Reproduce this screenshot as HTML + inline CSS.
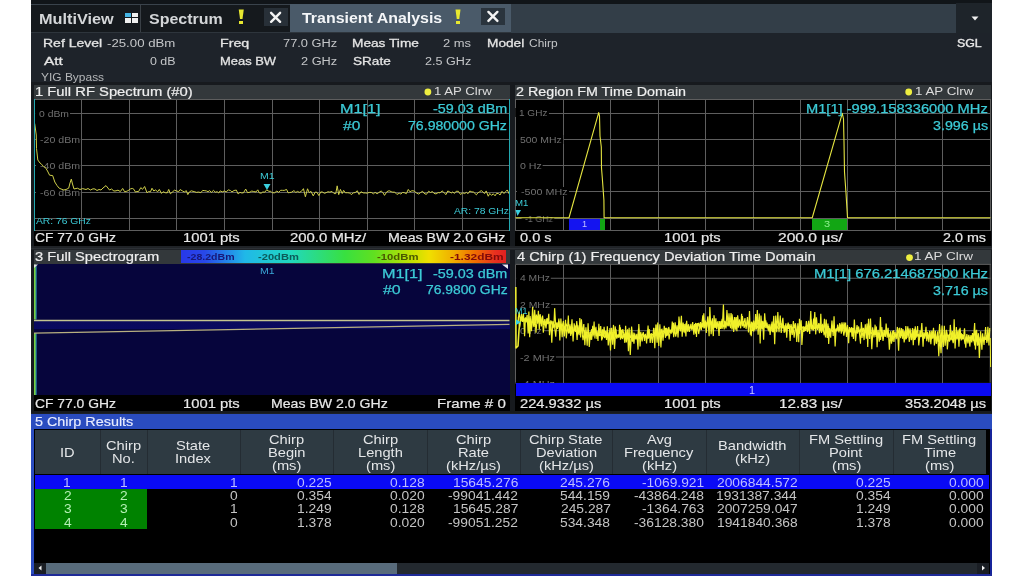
<!DOCTYPE html>
<html><head><meta charset="utf-8"><style>
html,body{margin:0;padding:0;background:#fff;}
body{width:1024px;height:576px;position:relative;overflow:hidden;font-family:"Liberation Sans",sans-serif;}
.t{position:absolute;white-space:pre;line-height:1;transform-origin:0 0;will-change:transform;}
svg{position:absolute;left:0;top:0;}
</style></head><body>
<div style="position:absolute;left:31px;top:0px;width:961px;height:576px;background:#1c2026;"></div>
<div style="position:absolute;left:31px;top:0px;width:961px;height:4px;background:#111519;"></div>
<div style="position:absolute;left:31px;top:4px;width:925px;height:1px;background:#3a434c;"></div>
<div style="position:absolute;left:31px;top:5px;width:259px;height:27px;background:#15191d;"></div>
<div style="position:absolute;left:140px;top:5px;width:1px;height:27px;background:#3a4046;"></div>
<div style="position:absolute;left:31px;top:32px;width:961px;height:1px;background:#2e353c;"></div>
<div style="position:absolute;left:263.8px;top:8px;width:24.399999999999977px;height:18px;background:#283038;"></div>
<div style="position:absolute;left:290px;top:4px;width:221px;height:28px;background:#4a5a69;"></div>
<div style="position:absolute;left:481px;top:8px;width:24px;height:17px;background:#2a343d;"></div>
<div style="position:absolute;left:511px;top:4px;width:445px;height:28.5px;background:#333e48;"></div>
<div style="position:absolute;left:956px;top:3px;width:36px;height:30px;background:#1e242a;"></div>
<div style="position:absolute;left:31px;top:33px;width:961px;height:49px;background:#1e232a;"></div>
<div style="position:absolute;left:125px;top:12.5px;width:6px;height:4.5px;background:#44b4e4;"></div>
<div style="position:absolute;left:132px;top:12.5px;width:6px;height:4.5px;background:#f0f0f0;"></div>
<div style="position:absolute;left:125px;top:18px;width:6px;height:4.5px;background:#f0f0f0;"></div>
<div style="position:absolute;left:132px;top:18px;width:6px;height:4.5px;background:#f0f0f0;"></div>
<div style="position:absolute;left:239.25px;top:21px;width:4.0px;height:2.8000000000000007px;background:#e8e830;"></div>
<div style="position:absolute;left:456.0px;top:21px;width:4.0px;height:2.8000000000000007px;background:#e8e830;"></div>
<div style="position:absolute;left:31px;top:82px;width:961px;height:331px;background:#171a1e;"></div>
<div style="position:absolute;left:34px;top:84.8px;width:476px;height:13.799999999999997px;background:#33383b;"></div>
<div style="position:absolute;left:34px;top:98.6px;width:476px;height:147.4px;background:#000;"></div>
<div style="position:absolute;left:34px;top:250px;width:476px;height:14.199999999999989px;background:#33383b;"></div>
<div style="position:absolute;left:34px;top:264.2px;width:476px;height:147.3px;background:#000;"></div>
<div style="position:absolute;left:515px;top:84.8px;width:476px;height:13.799999999999997px;background:#33383b;"></div>
<div style="position:absolute;left:515px;top:98.6px;width:476px;height:147.4px;background:#000;"></div>
<div style="position:absolute;left:515px;top:250px;width:476px;height:14.199999999999989px;background:#33383b;"></div>
<div style="position:absolute;left:515px;top:264.2px;width:476px;height:147.3px;background:#000;"></div>
<div style="position:absolute;left:31px;top:246px;width:961px;height:4px;background:#202327;"></div>
<div style="position:absolute;left:31px;top:247.6px;width:961px;height:1.0px;background:#2c3035;"></div>
<div style="position:absolute;left:34px;top:264.2px;width:475.5px;height:131.3px;background:#06053c;"></div>
<div style="position:absolute;left:569px;top:218px;width:30.5px;height:13px;background:#1414f0;"></div>
<div style="position:absolute;left:599.5px;top:218px;width:5.25px;height:13px;background:#12a614;"></div>
<div style="position:absolute;left:812.25px;top:218px;width:35.85000000000002px;height:13px;background:#12a614;"></div>
<div style="position:absolute;left:34px;top:321.2px;width:475.5px;height:7.800000000000011px;background:linear-gradient(to bottom,#0c0c70,#0c0c78);opacity:0.6"></div>
<div style="position:absolute;left:181.2px;top:250.3px;width:324.6px;height:12.899999999999977px;background:linear-gradient(to right,#2838e8 0%,#2848e8 7.3%,#20b8e8 19.7%,#20d8c0 33.5%,#38e040 50.4%,#60e020 59.4%,#c8e000 71.7%,#f0e000 76.3%,#f0b000 83.4%,#f07000 90.2%,#e83020 96.7%,#e02020 100%);"></div>
<div style="position:absolute;left:31px;top:413.8px;width:961px;height:162.2px;background:#2a4cbf;"></div>
<div style="position:absolute;left:34px;top:428.5px;width:955.6px;height:145.5px;background:#000;"></div>
<div style="position:absolute;left:990.2px;top:428.5px;width:1.7999999999999545px;height:147.5px;background:#16249a;"></div>
<div style="position:absolute;left:31px;top:574px;width:961px;height:2px;background:#1e2a98;"></div>
<div style="position:absolute;left:34.5px;top:430.3px;width:951.75px;height:43.5px;background:#2e3a42;"></div>
<div style="position:absolute;left:99.75px;top:430.3px;width:1.0px;height:43.5px;background:#242c33;"></div>
<div style="position:absolute;left:146.5px;top:430.3px;width:1.0px;height:43.5px;background:#242c33;"></div>
<div style="position:absolute;left:239.5px;top:430.3px;width:1.0px;height:43.5px;background:#242c33;"></div>
<div style="position:absolute;left:333.0px;top:430.3px;width:1.0px;height:43.5px;background:#242c33;"></div>
<div style="position:absolute;left:426.5px;top:430.3px;width:1.0px;height:43.5px;background:#242c33;"></div>
<div style="position:absolute;left:519.5px;top:430.3px;width:1.0px;height:43.5px;background:#242c33;"></div>
<div style="position:absolute;left:612.0px;top:430.3px;width:1.0px;height:43.5px;background:#242c33;"></div>
<div style="position:absolute;left:705.5px;top:430.3px;width:1.0px;height:43.5px;background:#242c33;"></div>
<div style="position:absolute;left:799.0px;top:430.3px;width:1.0px;height:43.5px;background:#242c33;"></div>
<div style="position:absolute;left:892.5px;top:430.3px;width:1.0px;height:43.5px;background:#242c33;"></div>
<div style="position:absolute;left:34.5px;top:474.8px;width:954.7px;height:14.199999999999989px;background:#0a0af6;"></div>
<div style="position:absolute;left:34.5px;top:489.0px;width:112.25px;height:40.25px;background:#008200;"></div>
<div style="position:absolute;left:34px;top:562.75px;width:955px;height:10.75px;background:#23292f;"></div>
<div style="position:absolute;left:34px;top:562.75px;width:11.600000000000001px;height:10.75px;background:#1a1e24;"></div>
<div style="position:absolute;left:977px;top:562.75px;width:12px;height:10.75px;background:#1a1e24;"></div>
<div style="position:absolute;left:45.6px;top:562.75px;width:351.4px;height:10.75px;background:#586b7b;"></div>
<svg width="1024" height="576" viewBox="0 0 1024 576"><path d="M238.75,9.5 L243.75,9.5 L242.5,19 L240.0,19 Z" fill="#e8e830"/><path d="M455.5,9.5 L460.5,9.5 L459.25,19 L456.75,19 Z" fill="#e8e830"/><path d="M271.1,12.8 L280.1,21.8 M280.1,12.8 L271.1,21.8" stroke="#f4f4f4" stroke-width="2.4" stroke-linecap="round"/><path d="M488.4,11.899999999999999 L497.4,20.9 M497.4,11.899999999999999 L488.4,20.9" stroke="#f4f4f4" stroke-width="2.4" stroke-linecap="round"/><path d="M971.5,16.5 L978.5,16.5 L975,20.5 Z" fill="#f0f0f0"/><line x1="81.5" y1="99" x2="81.5" y2="231" stroke="#5e5e5e" stroke-width="1" shape-rendering="crispEdges"/><line x1="129.5" y1="99" x2="129.5" y2="231" stroke="#5e5e5e" stroke-width="1" shape-rendering="crispEdges"/><line x1="176.5" y1="99" x2="176.5" y2="231" stroke="#5e5e5e" stroke-width="1" shape-rendering="crispEdges"/><line x1="224.5" y1="99" x2="224.5" y2="231" stroke="#5e5e5e" stroke-width="1" shape-rendering="crispEdges"/><line x1="272.5" y1="99" x2="272.5" y2="231" stroke="#5e5e5e" stroke-width="1" shape-rendering="crispEdges"/><line x1="319.5" y1="99" x2="319.5" y2="231" stroke="#5e5e5e" stroke-width="1" shape-rendering="crispEdges"/><line x1="367.5" y1="99" x2="367.5" y2="231" stroke="#5e5e5e" stroke-width="1" shape-rendering="crispEdges"/><line x1="414.5" y1="99" x2="414.5" y2="231" stroke="#5e5e5e" stroke-width="1" shape-rendering="crispEdges"/><line x1="462.5" y1="99" x2="462.5" y2="231" stroke="#5e5e5e" stroke-width="1" shape-rendering="crispEdges"/><line x1="34" y1="113.5" x2="510" y2="113.5" stroke="#5e5e5e" stroke-width="1" shape-rendering="crispEdges"/><line x1="34" y1="139.5" x2="510" y2="139.5" stroke="#5e5e5e" stroke-width="1" shape-rendering="crispEdges"/><line x1="34" y1="165.5" x2="510" y2="165.5" stroke="#5e5e5e" stroke-width="1" shape-rendering="crispEdges"/><line x1="34" y1="192.5" x2="510" y2="192.5" stroke="#5e5e5e" stroke-width="1" shape-rendering="crispEdges"/><line x1="34" y1="218.5" x2="510" y2="218.5" stroke="#5e5e5e" stroke-width="1" shape-rendering="crispEdges"/><line x1="34" y1="99.5" x2="510" y2="99.5" stroke="#5e5e5e" stroke-width="1" shape-rendering="crispEdges"/><line x1="34" y1="230.5" x2="510" y2="230.5" stroke="#5e5e5e" stroke-width="1" shape-rendering="crispEdges"/><line x1="563.5" y1="99" x2="563.5" y2="231" stroke="#5e5e5e" stroke-width="1" shape-rendering="crispEdges"/><line x1="610.5" y1="99" x2="610.5" y2="231" stroke="#5e5e5e" stroke-width="1" shape-rendering="crispEdges"/><line x1="658.5" y1="99" x2="658.5" y2="231" stroke="#5e5e5e" stroke-width="1" shape-rendering="crispEdges"/><line x1="705.5" y1="99" x2="705.5" y2="231" stroke="#5e5e5e" stroke-width="1" shape-rendering="crispEdges"/><line x1="753.5" y1="99" x2="753.5" y2="231" stroke="#5e5e5e" stroke-width="1" shape-rendering="crispEdges"/><line x1="800.5" y1="99" x2="800.5" y2="231" stroke="#5e5e5e" stroke-width="1" shape-rendering="crispEdges"/><line x1="847.5" y1="99" x2="847.5" y2="231" stroke="#5e5e5e" stroke-width="1" shape-rendering="crispEdges"/><line x1="895.5" y1="99" x2="895.5" y2="231" stroke="#5e5e5e" stroke-width="1" shape-rendering="crispEdges"/><line x1="942.5" y1="99" x2="942.5" y2="231" stroke="#5e5e5e" stroke-width="1" shape-rendering="crispEdges"/><line x1="515" y1="113.5" x2="991" y2="113.5" stroke="#5e5e5e" stroke-width="1" shape-rendering="crispEdges"/><line x1="515" y1="139.5" x2="991" y2="139.5" stroke="#5e5e5e" stroke-width="1" shape-rendering="crispEdges"/><line x1="515" y1="165.5" x2="991" y2="165.5" stroke="#5e5e5e" stroke-width="1" shape-rendering="crispEdges"/><line x1="515" y1="191.5" x2="991" y2="191.5" stroke="#5e5e5e" stroke-width="1" shape-rendering="crispEdges"/><line x1="515" y1="218.5" x2="991" y2="218.5" stroke="#5e5e5e" stroke-width="1" shape-rendering="crispEdges"/><line x1="515" y1="99.5" x2="991" y2="99.5" stroke="#5e5e5e" stroke-width="1" shape-rendering="crispEdges"/><line x1="515" y1="230.5" x2="991" y2="230.5" stroke="#5e5e5e" stroke-width="1" shape-rendering="crispEdges"/><line x1="515.5" y1="99" x2="515.5" y2="231" stroke="#5e5e5e" stroke-width="1" shape-rendering="crispEdges"/><line x1="990.5" y1="99" x2="990.5" y2="231" stroke="#5e5e5e" stroke-width="1" shape-rendering="crispEdges"/><line x1="563.5" y1="264" x2="563.5" y2="383" stroke="#5e5e5e" stroke-width="1" shape-rendering="crispEdges"/><line x1="610.5" y1="264" x2="610.5" y2="383" stroke="#5e5e5e" stroke-width="1" shape-rendering="crispEdges"/><line x1="658.5" y1="264" x2="658.5" y2="383" stroke="#5e5e5e" stroke-width="1" shape-rendering="crispEdges"/><line x1="705.5" y1="264" x2="705.5" y2="383" stroke="#5e5e5e" stroke-width="1" shape-rendering="crispEdges"/><line x1="753.5" y1="264" x2="753.5" y2="383" stroke="#5e5e5e" stroke-width="1" shape-rendering="crispEdges"/><line x1="800.5" y1="264" x2="800.5" y2="383" stroke="#5e5e5e" stroke-width="1" shape-rendering="crispEdges"/><line x1="847.5" y1="264" x2="847.5" y2="383" stroke="#5e5e5e" stroke-width="1" shape-rendering="crispEdges"/><line x1="895.5" y1="264" x2="895.5" y2="383" stroke="#5e5e5e" stroke-width="1" shape-rendering="crispEdges"/><line x1="942.5" y1="264" x2="942.5" y2="383" stroke="#5e5e5e" stroke-width="1" shape-rendering="crispEdges"/><line x1="515.5" y1="278.25" x2="991" y2="278.25" stroke="#5e5e5e" stroke-width="1"/><line x1="515.5" y1="304.4" x2="991" y2="304.4" stroke="#5e5e5e" stroke-width="1"/><line x1="515.5" y1="330.7" x2="991" y2="330.7" stroke="#5e5e5e" stroke-width="1"/><line x1="515.5" y1="357.0" x2="991" y2="357.0" stroke="#5e5e5e" stroke-width="1"/><line x1="515.5" y1="383.4" x2="991" y2="383.4" stroke="#5e5e5e" stroke-width="1"/><line x1="515.5" y1="264.4" x2="991" y2="264.4" stroke="#5e5e5e" stroke-width="1"/><line x1="515.5" y1="264.4" x2="515.5" y2="382.7" stroke="#5e5e5e" stroke-width="1"/><line x1="990.2" y1="264.4" x2="990.2" y2="382.7" stroke="#5e5e5e" stroke-width="1"/><path d="M263.5,184 L270.5,184 L267,190 Z" fill="#3ad0e0"/><path d="M515.5,210 L521,210 L517.5,216 Z" fill="#3ad0e0"/><line x1="34.9" y1="264.5" x2="34.9" y2="319.5" stroke="#78d040" stroke-width="1.8"/><line x1="36.1" y1="266" x2="36.1" y2="319.5" stroke="#30b8d0" stroke-width="0.8"/><line x1="34.9" y1="333" x2="34.9" y2="395" stroke="#78d040" stroke-width="1.8"/><line x1="36.1" y1="333" x2="36.1" y2="395" stroke="#30b8d0" stroke-width="0.8"/><line x1="34" y1="320.5" x2="509.5" y2="320.5" stroke="#c4c490" stroke-width="1.3"/><path d="M502,264.5 L508,264.5 L508,269 Z" fill="#e8e8f0"/><path d="M34,264.5 L38,264.5 L34,268 Z" fill="#e0e0e0"/><circle cx="427.9" cy="92.0" r="3.4" fill="#eeee40"/><circle cx="908.7" cy="92.0" r="3.4" fill="#eeee40"/><circle cx="909.5" cy="257.59999999999997" r="3.4" fill="#eeee40"/><path d="M38.5,568 L41.5,565.5 L41.5,570.5 Z" fill="#f0f0f0"/><path d="M985,568 L982,565.5 L982,570.5 Z" fill="#f0f0f0"/></svg>
<div class="t" style="left:38.58px;top:108.54px;font-size:9.4px;color:#707070;transform:scaleX(1.1078);background:#000;box-shadow:-3.5px 0 0 #000,1px 0 0 #000">0 dBm</div>
<div class="t" style="left:39.77px;top:134.74px;font-size:9.4px;color:#707070;transform:scaleX(1.1319);background:#000;box-shadow:-3.5px 0 0 #000,1px 0 0 #000">-20 dBm</div>
<div class="t" style="left:39.77px;top:161.14px;font-size:9.4px;color:#707070;transform:scaleX(1.1319);background:#000;box-shadow:-3.5px 0 0 #000,1px 0 0 #000">-40 dBm</div>
<div class="t" style="left:39.77px;top:187.54px;font-size:9.4px;color:#707070;transform:scaleX(1.1319);background:#000;box-shadow:-3.5px 0 0 #000,1px 0 0 #000">-60 dBm</div>
<div class="t" style="left:519.00px;top:108.29px;font-size:9.4px;color:#707070;transform:scaleX(1.0697);background:#000;box-shadow:-3.5px 0 0 #000,1px 0 0 #000">1 GHz</div>
<div class="t" style="left:519.68px;top:134.94px;font-size:9.4px;color:#707070;transform:scaleX(1.1128);background:#000;box-shadow:-3.5px 0 0 #000,1px 0 0 #000">500 MHz</div>
<div class="t" style="left:519.67px;top:161.24px;font-size:9.4px;color:#707070;transform:scaleX(1.1315);background:#000;box-shadow:-3.5px 0 0 #000,1px 0 0 #000">0 Hz</div>
<div class="t" style="left:520.92px;top:187.04px;font-size:9.4px;color:#707070;transform:scaleX(1.1441);background:#000;box-shadow:-3.5px 0 0 #000,1px 0 0 #000">-500 MHz</div>
<div class="t" style="left:525.35px;top:214.04px;font-size:9.4px;color:#707070;transform:scaleX(0.9443);background:#000;box-shadow:-3.5px 0 0 #000,1px 0 0 #000">-1 GHz</div>
<div class="t" style="left:520.39px;top:273.44px;font-size:9.4px;color:#707070;transform:scaleX(1.0997);background:#000;box-shadow:-3.5px 0 0 #000,1px 0 0 #000">4 MHz</div>
<div class="t" style="left:520.08px;top:299.84px;font-size:9.4px;color:#707070;transform:scaleX(1.1115);background:#000;box-shadow:-3.5px 0 0 #000,1px 0 0 #000">2 MHz</div>
<div class="t" style="left:520.17px;top:326.24px;font-size:9.4px;color:#707070;transform:scaleX(1.1315);background:#000;box-shadow:-3.5px 0 0 #000,1px 0 0 #000">0 Hz</div>
<div class="t" style="left:520.31px;top:352.64px;font-size:9.4px;color:#707070;transform:scaleX(1.1574);background:#000;box-shadow:-3.5px 0 0 #000,1px 0 0 #000">-2 MHz</div>
<div class="t" style="left:520.31px;top:379.04px;font-size:9.4px;color:#707070;transform:scaleX(1.1574);background:#000;box-shadow:-3.5px 0 0 #000,1px 0 0 #000">-4 MHz</div>
<svg width="1024" height="576" viewBox="0 0 1024 576"><polyline points="34.70,123.50 36.25,135.00 36.50,148.50 37.80,160.00 40.00,163.00 41.50,164.20 43.50,166.50 45.30,167.40 47.50,171.00 49.60,175.20 52.70,175.60 54.80,182.00 57.00,185.50 59.20,188.20 63.50,190.00 66.00,189.50 68.70,188.20 70.00,183.00 71.30,179.10 72.50,184.00 74.00,189.00 77.40,188.20 80.00,189.50 82.60,188.60 86.00,189.50 88.00,188.50 90.40,190.00 93.00,188.80 95.00,189.00 97.00,190.50 99.00,189.50 101.00,190.00 103.00,188.00 106.00,185.60 109.50,190.00 111.50,189.00 113.90,191.00 116.00,190.84 118.00,190.15 120.33,191.57 122.68,188.44 124.59,191.74 126.13,191.47 128.04,190.68 130.42,188.93 132.30,188.41 133.94,189.37 135.47,192.10 136.95,191.44 138.50,191.66 140.80,187.61 142.55,189.31 144.64,186.50 147.04,192.81 148.49,191.54 150.48,191.83 151.97,188.23 153.84,191.03 155.43,189.92 157.73,191.72 159.32,189.43 161.45,193.43 163.06,191.72 165.44,192.76 167.28,192.83 168.72,189.45 170.36,193.79 172.31,192.09 174.49,190.22 176.52,190.94 178.70,191.62 180.14,189.55 182.54,190.99 184.29,191.94 186.33,190.67 187.81,194.62 189.25,192.06 191.28,190.84 193.04,191.34 194.83,191.75 196.32,192.37 198.63,192.05 200.83,192.68 202.70,190.42 204.82,190.68 206.48,190.96 208.02,191.70 209.71,190.58 211.35,192.41 213.48,190.38 215.30,192.18 217.21,191.70 218.71,192.96 220.14,190.88 222.32,191.90 224.48,190.94 226.22,192.03 228.31,189.82 230.49,190.60 231.95,191.95 234.06,190.48 236.34,190.08 238.11,193.93 239.97,192.33 241.51,192.93 243.43,192.88 245.70,189.04 247.56,192.70 249.95,192.16 251.77,191.03 253.71,191.55 255.97,191.98 257.78,189.82 259.26,192.82 261.17,193.18 262.79,191.97 264.80,192.18 266.65,189.88 268.98,191.35 270.74,191.28 272.23,192.76 274.54,192.81 276.85,191.06 278.62,192.36 280.74,190.27 282.64,190.35 284.21,190.40 286.55,189.45 288.11,192.77 289.64,192.56 291.62,192.16 293.94,190.60 295.81,192.43 297.61,191.38 299.26,192.37 301.38,191.36 303.44,188.67 305.37,196.76 307.55,188.77 309.18,192.68 310.95,191.27 313.24,195.89 315.22,192.07 316.94,192.30 318.89,195.57 320.65,191.97 322.26,191.94 324.60,193.34 326.13,192.63 327.94,191.75 329.86,192.11 331.94,191.40 334.06,193.56 335.75,193.61 337.18,185.83 338.71,194.67 340.41,189.43 342.19,193.55 343.62,190.36 345.30,192.77 347.58,192.74 349.69,193.00 351.27,194.62 353.38,192.88 355.20,192.54 357.30,190.75 359.08,194.49 360.96,191.72 363.21,192.91 365.54,193.01 367.03,193.17 369.24,192.43 371.26,192.43 373.49,193.79 375.08,192.37 377.12,193.76 378.85,192.49 381.14,190.99 382.79,192.46 384.51,195.39 386.89,191.70 389.06,190.73 391.18,191.64 392.81,192.18 394.69,192.08 396.90,194.41 399.27,193.26 400.90,194.09 402.45,192.45 404.21,192.68 406.35,193.66 408.29,189.46 409.91,191.80 411.89,190.74 414.12,190.98 416.38,192.91 418.74,194.09 420.38,192.68 422.58,191.30 424.03,193.30 426.33,194.40 428.63,191.24 430.48,192.46 432.47,191.57 433.92,193.29 435.99,193.94 438.20,192.56 440.03,192.90 442.06,190.85 444.08,192.76 446.03,194.64 447.74,190.97 449.62,191.79 451.29,192.99 452.80,191.85 454.36,193.48 456.11,191.29 458.39,191.31 460.54,194.51 462.69,192.82 464.64,193.55 466.44,192.32 467.87,193.76 469.87,191.06 471.90,191.95 473.39,191.97 474.99,193.48 476.40,194.84 477.87,192.86 479.62,191.71 481.46,190.59 482.97,192.20 484.59,193.57 486.20,190.92 488.25,196.24 489.75,193.42 491.63,195.42 493.23,193.74 495.07,195.84 496.55,193.39 498.52,193.63 500.03,195.02 502.00,191.31 503.98,193.56 505.52,191.71 507.28,189.95 509.50,194.50" fill="none" stroke="#cfcf4a" stroke-width="1.0" stroke-linejoin="round" /><line x1="34.5" y1="99" x2="34.5" y2="231" stroke="#22a8b0" stroke-width="1"/><line x1="509.5" y1="99" x2="509.5" y2="231" stroke="#22a8b0" stroke-width="1"/><polyline points="515.50,217.75 569.00,217.75 598.70,112.60 599.50,116.00 600.00,136.00 601.30,147.00 601.50,168.00 602.30,178.00 603.90,200.00 604.10,217.75 812.25,217.75 842.30,113.30 843.50,119.00 844.00,142.00 844.50,172.00 846.00,193.00 847.50,217.75 990.50,217.75" fill="none" stroke="#e4e440" stroke-width="1.1" stroke-linejoin="round" /><polyline points="34.00,333.20 509.50,324.40" fill="none" stroke="#b8b080" stroke-width="1.3" stroke-linejoin="round" /><polyline points="518.00,321.01 519.17,311.88 520.39,321.48 521.57,314.06 522.43,321.89 523.44,313.52 524.61,336.34 525.44,317.28 526.17,322.44 527.15,314.91 528.16,333.50 528.86,311.45 529.68,337.12 530.48,318.44 531.48,331.17 532.63,307.04 533.63,326.58 534.69,309.89 535.59,323.13 536.51,314.46 537.58,323.64 538.37,310.68 539.31,329.55 540.14,314.17 541.36,326.48 542.57,315.50 543.61,325.22 544.87,319.04 546.10,325.30 547.02,318.36 547.75,324.24 548.77,313.84 549.49,335.26 550.77,320.22 551.78,342.81 552.84,321.42 553.85,326.92 554.64,308.16 555.83,327.74 557.02,322.36 558.19,327.09 559.03,321.40 559.84,340.49 560.88,318.57 562.15,337.14 563.16,323.23 564.31,336.52 565.53,319.71 566.27,338.32 567.54,326.50 568.65,333.38 569.93,324.25 570.75,335.92 572.00,319.37 573.07,341.35 574.16,323.33 575.14,330.84 575.95,325.23 577.11,340.05 577.88,325.33 579.10,335.25 579.83,318.15 580.68,337.59 581.41,319.28 582.51,333.71 583.78,324.15 584.87,345.10 585.91,327.20 587.19,345.74 588.08,323.39 589.26,346.86 590.44,331.61 591.67,339.79 592.75,325.88 593.85,334.88 595.03,328.33 596.25,336.16 596.97,330.75 598.00,341.03 598.86,323.74 599.62,335.98 600.71,326.00 601.64,340.34 602.49,329.39 603.23,336.35 604.11,326.72 604.89,336.67 605.64,330.79 606.53,339.91 607.34,326.20 608.26,345.39 609.40,331.66 610.50,350.43 611.66,327.76 612.68,344.78 613.46,324.90 614.54,349.05 615.81,329.09 616.74,338.62 617.90,334.92 618.87,337.72 619.59,324.81 620.52,339.73 621.45,329.74 622.38,339.03 623.68,334.10 624.87,342.82 625.63,325.72 626.43,341.80 627.58,329.35 628.41,351.28 629.13,327.76 630.26,354.86 631.50,332.14 632.43,341.63 633.15,335.38 633.96,343.80 634.77,333.59 635.79,339.39 636.86,333.98 638.04,349.59 638.82,324.05 640.08,346.38 640.91,334.02 642.16,341.38 643.22,333.38 644.20,337.10 645.39,333.87 646.60,343.55 647.48,331.06 648.28,338.63 649.18,329.08 650.19,342.85 651.24,332.99 652.42,342.84 653.69,327.72 654.80,348.17 655.90,324.55 657.07,342.62 657.77,322.57 658.72,345.89 659.86,324.37 660.89,347.59 661.97,328.67 663.03,340.77 664.26,325.92 665.41,337.81 666.59,327.86 667.78,335.59 668.72,326.98 669.87,332.94 671.02,330.05 672.22,332.42 673.39,322.78 674.11,332.33 675.16,322.39 676.27,333.85 677.08,325.33 678.04,337.40 678.96,316.51 680.19,330.75 681.42,315.70 682.17,336.82 683.12,322.53 684.10,332.09 685.03,324.08 685.92,336.49 686.65,320.77 687.62,331.68 688.47,324.25 689.55,329.25 690.56,326.17 691.84,329.07 692.69,321.98 693.86,334.64 694.64,323.94 695.63,333.64 696.70,323.63 697.61,327.43 698.60,322.84 699.69,327.64 700.49,322.12 701.21,330.17 702.19,322.89 702.99,327.32 703.80,313.33 704.75,328.11 706.01,322.43 706.73,327.45 707.90,316.28 709.13,336.18 709.85,307.13 711.14,334.30 712.25,321.20 713.32,336.09 714.03,315.19 714.98,328.05 715.88,318.27 716.69,329.15 717.95,321.16 719.06,335.93 719.76,321.02 720.54,328.95 721.37,320.72 722.23,328.83 723.42,304.59 724.14,329.34 724.89,320.79 725.96,328.45 726.93,310.00 728.09,326.26 729.01,313.29 729.95,326.32 731.07,313.08 731.94,329.42 732.91,319.84 733.66,331.92 734.46,317.13 735.29,329.81 736.15,317.11 736.90,331.27 737.64,315.25 738.86,325.70 739.78,322.49 740.64,328.32 741.61,313.88 742.33,326.32 743.08,321.20 744.13,327.83 745.17,323.30 746.36,327.06 747.41,317.05 748.48,332.51 749.50,310.91 750.37,334.74 751.48,321.70 752.67,330.95 753.52,320.49 754.76,330.13 755.58,314.13 756.32,329.49 757.34,310.09 758.12,334.69 759.27,313.49 760.16,343.51 760.96,315.46 761.96,329.52 762.83,321.43 763.61,339.68 764.66,313.21 765.81,328.01 766.97,322.71 768.22,330.08 769.07,324.06 770.13,335.01 771.26,323.91 772.54,332.20 773.79,315.92 774.68,344.21 775.75,315.42 776.73,332.22 777.83,312.15 779.02,332.17 780.26,315.45 781.23,332.94 782.15,323.10 783.08,328.34 784.05,325.28 784.83,332.21 785.87,323.26 786.71,337.70 787.59,324.74 788.48,328.82 789.25,324.29 790.12,341.00 791.17,325.95 792.24,334.88 793.36,321.08 794.18,328.47 795.48,323.17 796.77,341.99 797.83,323.31 798.73,342.24 799.47,318.71 800.22,329.93 801.18,320.35 801.88,344.99 803.12,326.10 804.01,331.95 804.73,326.66 805.49,330.90 806.39,321.14 807.57,330.62 808.64,320.90 809.69,333.99 810.77,310.92 811.51,329.34 812.70,325.68 813.51,330.53 814.79,312.14 815.73,334.35 816.44,317.30 817.57,329.91 818.81,323.22 820.07,329.98 820.80,313.71 821.53,330.82 822.49,324.88 823.27,331.98 824.47,318.87 825.51,337.36 826.22,319.56 827.20,338.07 827.94,323.53 828.67,344.07 829.60,328.16 830.69,337.77 831.97,320.57 833.19,336.03 834.06,316.39 835.12,346.36 836.14,328.30 836.89,331.33 837.64,324.68 838.93,332.46 839.74,322.99 840.96,331.25 841.97,322.39 842.85,331.32 844.03,322.29 844.74,332.38 845.55,322.59 846.51,336.89 847.38,326.73 848.62,343.32 849.51,327.14 850.51,332.06 851.27,328.30 851.99,336.64 852.70,328.10 853.45,338.99 854.34,319.52 855.52,341.16 856.55,329.79 857.76,333.56 858.53,326.48 859.67,332.71 860.80,328.54 861.97,337.82 863.10,329.89 864.08,340.07 865.34,324.21 866.28,338.75 867.00,323.59 867.74,346.86 868.55,318.75 869.62,338.90 870.51,318.62 871.79,349.20 872.88,329.90 873.76,334.88 874.53,331.52 875.31,335.04 876.34,326.43 877.08,347.18 878.06,329.80 879.28,341.71 880.45,316.96 881.27,336.65 882.33,331.78 883.03,341.03 884.22,329.90 885.38,336.36 886.13,323.54 887.19,337.70 888.12,327.80 889.39,349.63 890.46,332.45 891.44,343.61 892.72,330.78 893.92,341.93 894.99,332.10 896.16,339.13 897.38,326.91 898.61,350.69 899.61,327.68 900.70,338.25 901.49,327.99 902.79,339.03 904.04,331.10 905.07,339.54 905.82,326.07 906.95,337.97 908.18,328.48 908.88,336.40 910.04,328.28 911.29,340.23 912.51,327.98 913.27,345.29 914.20,328.73 915.21,339.74 916.51,330.50 917.41,336.51 918.22,333.89 919.28,339.14 920.01,330.53 920.74,336.78 921.83,322.98 923.07,346.74 923.80,332.38 924.75,338.69 926.01,326.89 926.75,341.30 927.46,332.90 928.44,339.41 929.73,330.72 930.86,344.19 931.78,330.78 932.63,338.60 933.50,327.85 934.41,345.53 935.32,330.80 936.41,343.61 937.69,331.41 938.77,356.30 939.90,335.37 941.01,353.30 942.19,332.26 943.29,347.08 944.33,325.89 945.17,345.71 946.32,330.39 947.34,349.34 948.57,334.75 949.43,341.61 950.32,324.91 951.44,339.42 952.37,331.12 953.44,342.25 954.15,319.23 955.08,348.59 956.31,327.06 957.39,338.62 958.16,330.63 958.93,346.83 960.06,327.72 961.23,340.43 962.19,334.07 963.34,339.08 964.53,328.37 965.76,347.67 966.84,334.12 967.92,343.35 968.85,334.74 969.82,346.57 970.92,334.97 971.73,342.55 972.54,332.94 973.38,341.14 974.65,323.02 975.46,349.60 976.61,329.78 977.49,345.74 978.39,333.15 979.39,358.00 980.60,331.36 981.89,349.69 982.64,336.29 983.40,340.10 984.40,336.82 985.31,339.87 986.20,335.38 987.10,341.44 987.88,326.83 988.97,345.52 989.73,328.00" stroke="#eeee2a" stroke-width="1.2" fill="none" stroke-linejoin="bevel"/><polyline points="518.30,316.78 519.53,327.33 520.91,318.50 522.15,321.35 522.98,317.34 524.05,321.93 524.93,318.15 526.10,320.83 527.47,319.78 528.90,326.67 530.13,316.08 531.47,328.05 532.90,318.85 534.10,327.28 534.98,317.55 535.98,332.62 537.38,316.33 538.74,322.21 539.85,314.79 540.88,323.78 542.30,316.56 543.32,332.74 544.66,321.27 546.04,328.35 546.99,318.65 548.01,323.38 549.61,321.85 550.43,325.78 551.88,320.94 553.15,328.21 554.24,323.90 555.73,336.59 556.68,324.68 557.59,328.87 558.89,318.49 559.75,330.02 561.18,323.97 562.04,327.91 563.35,320.99 564.51,329.07 566.08,323.62 567.45,328.70 568.32,315.64 569.17,333.33 570.13,326.40 571.19,334.34 572.64,327.10 573.52,332.33 574.75,328.89 575.76,331.90 576.74,320.96 578.20,333.82 579.02,330.29 580.06,332.87 581.54,327.96 583.03,340.19 584.51,330.21 585.52,338.42 586.59,331.51 588.05,333.42 588.98,332.13 590.16,340.01 591.71,329.08 593.09,336.44 594.11,321.57 594.91,338.59 595.93,326.70 596.98,338.90 598.36,333.69 599.35,335.89 600.83,334.33 602.08,339.20 603.58,334.87 604.79,337.97 605.76,335.43 606.61,337.75 607.77,332.65 608.88,338.78 609.98,328.02 611.18,339.53 612.61,334.20 613.78,339.01 615.18,326.25 616.63,337.83 618.01,334.40 619.37,336.71 620.37,327.34 621.49,337.82 622.82,328.99 624.24,336.87 625.55,331.52 626.38,342.45 627.39,330.86 628.33,339.32 629.40,335.19 630.63,337.89 631.63,326.59 633.01,341.32 633.87,332.64 635.13,337.88 636.28,335.83 637.49,339.66 638.50,328.66 639.93,339.03 640.76,331.90 641.72,337.19 643.30,332.04 644.53,340.82 645.38,334.77 646.92,339.27 648.06,325.62 648.99,337.72 650.42,334.47 651.76,335.96 652.74,334.06 654.10,336.02 655.26,328.05 656.08,334.69 657.11,324.49 658.10,335.72 659.23,332.61 660.15,335.40 661.11,329.19 662.04,333.85 663.00,330.42 664.47,332.97 665.34,327.77 666.54,336.09 667.97,328.48 669.17,339.56 670.33,329.69 671.26,333.67 672.27,321.54 673.70,337.25 674.66,328.81 675.71,336.63 676.81,330.18 678.15,332.50 679.63,326.10 680.79,331.44 681.78,323.65 682.64,332.57 683.97,324.12 684.99,333.30 686.12,322.80 686.99,328.60 687.87,327.23 689.38,331.81 690.91,323.85 691.89,330.08 693.05,325.67 694.62,327.06 695.68,322.94 696.49,336.91 697.35,323.06 698.71,334.05 700.18,324.54 701.24,329.69 702.78,315.31 703.86,328.49 705.42,320.59 706.29,332.89 707.62,317.25 708.87,329.91 710.41,319.59 711.37,325.48 712.44,318.25 713.41,327.58 714.99,324.10 716.03,327.94 716.90,322.09 718.37,325.84 719.65,321.85 721.00,328.53 722.11,318.91 723.14,327.20 724.67,323.36 725.75,327.08 726.95,322.09 728.03,326.00 729.10,321.51 730.65,328.22 732.10,314.36 733.49,327.38 734.96,317.87 736.33,329.41 737.35,322.57 738.32,327.65 739.47,319.50 740.89,324.68 742.45,316.09 743.48,325.54 745.00,318.12 746.06,329.05 747.53,319.88 748.98,326.97 750.15,324.25 751.26,336.08 752.48,322.54 753.71,331.56 755.31,320.86 756.14,329.13 757.36,326.27 758.82,328.93 760.19,324.46 761.42,327.67 762.88,320.95 764.41,327.33 765.83,320.40 766.92,328.20 767.98,326.32 768.97,331.28 769.86,325.32 771.00,331.28 772.03,321.65 773.43,332.13 774.71,323.56 775.95,328.60 776.97,325.82 778.32,329.18 779.88,326.43 781.34,327.36 782.87,317.84 784.09,332.77 785.63,325.63 786.91,328.02 788.16,322.62 789.69,330.18 791.08,324.06 791.93,328.58 793.10,327.16 794.14,337.74 795.60,324.88 796.63,333.36 798.11,326.18 799.57,333.78 800.61,323.85 801.94,327.87 803.44,327.68 804.84,328.33 805.95,326.60 807.46,331.97 809.00,327.80 809.93,328.63 810.97,319.15 812.17,330.27 813.58,318.47 814.49,328.78 815.93,327.10 817.43,328.66 818.52,324.68 819.46,333.21 820.45,327.28 821.55,333.00 822.73,323.91 824.05,335.28 825.56,328.64 827.08,332.27 828.52,325.93 829.74,336.18 831.02,328.92 832.45,331.75 833.91,328.97 834.90,332.83 835.91,329.03 836.73,330.92 837.99,327.21 839.40,330.67 840.38,324.56 841.28,333.61 842.26,323.78 843.82,335.57 845.07,328.10 846.42,330.57 847.49,325.06 848.45,333.66 849.76,327.85 850.60,332.26 851.70,327.11 852.98,333.84 854.43,331.01 855.77,333.29 857.06,325.05 857.92,331.69 859.10,330.25 860.51,343.65 861.32,322.12 862.37,332.12 863.34,327.79 864.46,333.31 865.29,327.84 866.89,334.38 867.97,325.83 868.92,335.04 870.40,331.90 871.83,334.02 872.65,327.36 874.03,337.44 875.09,324.67 876.05,337.03 876.95,331.37 877.82,335.50 879.23,332.87 880.56,339.85 881.84,327.12 883.20,339.27 884.22,330.30 885.11,336.95 886.43,331.27 887.53,334.12 888.49,333.11 889.76,337.09 890.59,331.23 892.18,341.35 893.56,330.32 894.88,336.19 896.18,334.00 897.07,338.43 897.89,327.99 899.31,336.61 900.71,331.38 901.61,336.03 902.96,329.15 904.16,342.37 905.47,334.56 906.32,339.25 907.80,326.37 909.27,341.89 910.53,333.32 911.92,339.73 913.12,330.91 914.45,339.92 915.27,326.24 916.21,337.74 917.58,325.95 918.76,345.39 919.96,334.90 921.06,337.11 922.36,333.00 923.44,336.02 924.80,333.48 926.06,336.24 927.46,331.85 928.84,342.29 929.91,331.83 931.02,339.63 932.53,334.15 934.00,337.66 935.38,333.94 936.30,343.56 937.56,335.89 938.48,341.87 939.55,324.03 940.96,343.31 942.05,325.60 942.92,337.18 944.34,335.32 945.43,342.73 946.46,329.91 948.00,338.29 949.49,333.90 950.85,340.32 952.08,336.98 953.17,343.07 954.69,334.58 956.11,339.48 957.06,335.22 958.32,340.00 959.31,328.96 960.37,338.73 961.19,333.22 962.47,339.36 963.51,335.46 965.10,344.19 966.04,336.67 967.20,341.37 968.38,335.43 969.88,338.74 970.74,336.78 972.32,338.76 973.30,335.27 974.66,345.45 975.74,330.59 976.78,341.67 977.79,335.47 978.59,344.60 980.02,336.82 981.30,342.34 982.63,333.36 984.02,344.86 985.60,327.02 986.86,342.88 987.88,333.64 989.19,339.65" stroke="#f2f22a" stroke-width="1.1" fill="none" stroke-linejoin="bevel"/><polyline points="515.80,287.00 516.00,348.00 518.00,346.00 519.00,330.00 520.00,322.00" fill="none" stroke="#ecec30" stroke-width="1.6" stroke-linejoin="round" /><polyline points="990.30,338.00 990.60,367.00" fill="none" stroke="#ecec30" stroke-width="1.0" stroke-linejoin="round" /></svg>
<div class="t" style="left:38.94px;top:11.65px;font-size:14px;font-weight:bold;color:#d4d6d8;transform:scaleX(1.1629);">MultiView</div>
<div class="t" style="left:149.22px;top:11.55px;font-size:14px;font-weight:bold;color:#d4d6d8;transform:scaleX(1.1413);">Spectrum</div>
<div class="t" style="left:302.34px;top:10.75px;font-size:14px;font-weight:bold;color:#f4f6f8;transform:scaleX(1.1380);">Transient Analysis</div>
<div class="t" style="left:957.44px;top:38.36px;font-size:10.8px;color:#e8e8e8;transform:scaleX(1.1424);-webkit-text-stroke:0.35px #e8e8e8">SGL</div>
<div class="t" style="left:42.63px;top:37.29px;font-size:11.7px;color:#e4e4e4;transform:scaleX(1.1993);-webkit-text-stroke:0.3px #e4e4e4">Ref Level</div>
<div class="t" style="left:107.40px;top:37.29px;font-size:11.7px;color:#c4c6c8;transform:scaleX(1.1317);">-25.00 dBm</div>
<div class="t" style="left:44.10px;top:54.69px;font-size:11.7px;color:#e4e4e4;transform:scaleX(1.3225);-webkit-text-stroke:0.3px #e4e4e4">Att</div>
<div class="t" style="left:150.10px;top:54.69px;font-size:11.7px;color:#c4c6c8;transform:scaleX(1.0613);">0 dB</div>
<div class="t" style="left:41.36px;top:70.59px;font-size:11.7px;color:#b4b6b8;transform:scaleX(1.0224);">YIG Bypass</div>
<div class="t" style="left:219.86px;top:37.09px;font-size:11.7px;color:#e4e4e4;transform:scaleX(1.2185);-webkit-text-stroke:0.3px #e4e4e4">Freq</div>
<div class="t" style="left:283.36px;top:37.09px;font-size:11.7px;color:#c4c6c8;transform:scaleX(1.0982);">77.0 GHz</div>
<div class="t" style="left:219.96px;top:54.69px;font-size:11.7px;color:#e4e4e4;transform:scaleX(1.1061);-webkit-text-stroke:0.3px #e4e4e4">Meas BW</div>
<div class="t" style="left:301.36px;top:54.69px;font-size:11.7px;color:#c4c6c8;transform:scaleX(1.0938);">2 GHz</div>
<div class="t" style="left:352.30px;top:37.09px;font-size:11.7px;color:#e4e4e4;transform:scaleX(1.1710);-webkit-text-stroke:0.3px #e4e4e4">Meas Time</div>
<div class="t" style="left:443.35px;top:37.09px;font-size:11.7px;color:#c4c6c8;transform:scaleX(1.1095);">2 ms</div>
<div class="t" style="left:352.79px;top:54.69px;font-size:11.7px;color:#e4e4e4;transform:scaleX(1.1607);-webkit-text-stroke:0.3px #e4e4e4">SRate</div>
<div class="t" style="left:425.37px;top:54.69px;font-size:11.7px;color:#c4c6c8;transform:scaleX(1.0774);">2.5 GHz</div>
<div class="t" style="left:486.65px;top:37.09px;font-size:11.7px;color:#e4e4e4;transform:scaleX(1.1700);-webkit-text-stroke:0.3px #e4e4e4">Model</div>
<div class="t" style="left:529.40px;top:37.09px;font-size:11.7px;color:#c4c6c8;transform:scaleX(1.0219);">Chirp</div>
<div class="t" style="left:35.70px;top:215.79px;font-size:9.4px;color:#3ccad6;transform:scaleX(1.0970);">AR: 76 GHz</div>
<div class="t" style="left:454.00px;top:205.84px;font-size:9.4px;color:#3ccad6;transform:scaleX(1.0970);">AR: 78 GHz</div>
<div class="t" style="left:259.86px;top:170.54px;font-size:9.4px;color:#3ccad6;transform:scaleX(1.1185);">M1</div>
<div class="t" style="left:340.41px;top:102.84px;font-size:12px;color:#3ccad6;transform:scaleX(1.3482);-webkit-text-stroke:0.25px #3ccad6">M1[1]</div>
<div class="t" style="left:433.35px;top:102.64px;font-size:12px;color:#3ccad6;transform:scaleX(1.1957);-webkit-text-stroke:0.25px #3ccad6">-59.03 dBm</div>
<div class="t" style="left:342.62px;top:120.04px;font-size:12px;color:#3ccad6;transform:scaleX(1.2928);-webkit-text-stroke:0.25px #3ccad6">#0</div>
<div class="t" style="left:408.39px;top:120.04px;font-size:12px;color:#3ccad6;transform:scaleX(1.1767);-webkit-text-stroke:0.25px #3ccad6">76.980000 GHz</div>
<div class="t" style="left:581.54px;top:219.91px;font-size:9.2px;color:#c0c0ff;transform:scaleX(0.9495);">1</div>
<div class="t" style="left:824.21px;top:220.21px;font-size:9.2px;color:#90f090;transform:scaleX(1.2002);">3</div>
<div class="t" style="left:514.98px;top:197.64px;font-size:9.4px;color:#3ccad6;transform:scaleX(1.0302);">M1</div>
<div class="t" style="left:806.33px;top:102.74px;font-size:12px;color:#3ccad6;transform:scaleX(1.2216);-webkit-text-stroke:0.25px #3ccad6">M1[1] -999.158336000 MHz</div>
<div class="t" style="left:932.50px;top:119.84px;font-size:12px;color:#3ccad6;transform:scaleX(1.1889);-webkit-text-stroke:0.25px #3ccad6">3.996 µs</div>
<div class="t" style="left:259.86px;top:265.54px;font-size:9.4px;color:#3aa8d8;transform:scaleX(1.1185);">M1</div>
<div class="t" style="left:382.20px;top:267.64px;font-size:12px;color:#3ccad6;transform:scaleX(1.3517);-webkit-text-stroke:0.25px #3ccad6">M1[1]</div>
<div class="t" style="left:433.35px;top:267.64px;font-size:12px;color:#3ccad6;transform:scaleX(1.1973);-webkit-text-stroke:0.25px #3ccad6">-59.03 dBm</div>
<div class="t" style="left:383.42px;top:284.24px;font-size:12px;color:#3ccad6;transform:scaleX(1.3240);-webkit-text-stroke:0.25px #3ccad6">#0</div>
<div class="t" style="left:425.81px;top:284.24px;font-size:12px;color:#3ccad6;transform:scaleX(1.1533);-webkit-text-stroke:0.25px #3ccad6">76.9800 GHz</div>
<div class="t" style="left:186.58px;top:251.67px;font-size:9.6px;font-weight:bold;color:#181878;transform:scaleX(1.1009);">-28.2dBm</div>
<div class="t" style="left:258.05px;top:251.67px;font-size:9.6px;font-weight:bold;color:#0c5a5a;transform:scaleX(1.1613);">-20dBm</div>
<div class="t" style="left:377.35px;top:251.67px;font-size:9.6px;font-weight:bold;color:#4a5800;transform:scaleX(1.1788);">-10dBm</div>
<div class="t" style="left:449.52px;top:251.67px;font-size:9.6px;font-weight:bold;color:#800a0a;transform:scaleX(1.2405);">-1.32dBm</div>
<div class="t" style="left:814.11px;top:268.44px;font-size:12px;color:#3ccad6;transform:scaleX(1.2364);-webkit-text-stroke:0.25px #3ccad6">M1[1] 676.214687500 kHz</div>
<div class="t" style="left:933.00px;top:285.24px;font-size:12px;color:#3ccad6;transform:scaleX(1.1867);-webkit-text-stroke:0.25px #3ccad6">3.716 µs</div>
<div class="t" style="left:35.14px;top:85.50px;font-size:12.7px;color:#eeeeee;transform:scaleX(1.1647);-webkit-text-stroke:0.2px #eeeeee">1 Full RF Spectrum (#0)</div>
<div class="t" style="left:516.48px;top:85.50px;font-size:12.7px;color:#eeeeee;transform:scaleX(1.1270);-webkit-text-stroke:0.2px #eeeeee">2 Region FM Time Domain</div>
<div class="t" style="left:35.08px;top:250.55px;font-size:12.7px;color:#eeeeee;transform:scaleX(1.1589);-webkit-text-stroke:0.2px #eeeeee">3 Full Spectrogram</div>
<div class="t" style="left:517.21px;top:250.50px;font-size:12.7px;color:#eeeeee;transform:scaleX(1.1574);-webkit-text-stroke:0.2px #eeeeee">4 Chirp (1) Frequency Deviation Time Domain</div>
<div class="t" style="left:434.41px;top:86.79px;font-size:10.4px;color:#dcdcdc;transform:scaleX(1.2701);">1 AP Clrw</div>
<div class="t" style="left:914.50px;top:86.79px;font-size:10.4px;color:#dcdcdc;transform:scaleX(1.2858);">1 AP Clrw</div>
<div class="t" style="left:913.59px;top:252.39px;font-size:10.4px;color:#dcdcdc;transform:scaleX(1.2970);">1 AP Clrw</div>
<div class="t" style="left:34.81px;top:231.49px;font-size:13px;color:#e8e8e8;transform:scaleX(1.0663);-webkit-text-stroke:0.2px #e8e8e8">CF 77.0 GHz</div>
<div class="t" style="left:183.39px;top:231.49px;font-size:13px;color:#e8e8e8;transform:scaleX(1.1358);-webkit-text-stroke:0.2px #e8e8e8">1001 pts</div>
<div class="t" style="left:34.81px;top:396.74px;font-size:13px;color:#e8e8e8;transform:scaleX(1.0663);-webkit-text-stroke:0.2px #e8e8e8">CF 77.0 GHz</div>
<div class="t" style="left:183.39px;top:396.74px;font-size:13px;color:#e8e8e8;transform:scaleX(1.1358);-webkit-text-stroke:0.2px #e8e8e8">1001 pts</div>
<div class="t" style="left:289.75px;top:231.49px;font-size:13px;color:#e8e8e8;transform:scaleX(1.1466);-webkit-text-stroke:0.2px #e8e8e8">200.0 MHz/</div>
<div class="t" style="left:388.37px;top:231.49px;font-size:13px;color:#e8e8e8;transform:scaleX(1.0901);-webkit-text-stroke:0.2px #e8e8e8">Meas BW 2.0 GHz</div>
<div class="t" style="left:519.92px;top:231.49px;font-size:13px;color:#e8e8e8;transform:scaleX(1.1199);-webkit-text-stroke:0.2px #e8e8e8">0.0 s</div>
<div class="t" style="left:664.39px;top:231.49px;font-size:13px;color:#e8e8e8;transform:scaleX(1.1358);-webkit-text-stroke:0.2px #e8e8e8">1001 pts</div>
<div class="t" style="left:777.97px;top:231.49px;font-size:13px;color:#e8e8e8;transform:scaleX(1.2005);-webkit-text-stroke:0.2px #e8e8e8">200.0 µs/</div>
<div class="t" style="left:943.03px;top:231.49px;font-size:13px;color:#e8e8e8;transform:scaleX(1.1017);-webkit-text-stroke:0.2px #e8e8e8">2.0 ms</div>
<div class="t" style="left:270.87px;top:396.74px;font-size:13px;color:#e8e8e8;transform:scaleX(1.0854);-webkit-text-stroke:0.2px #e8e8e8">Meas BW 2.0 GHz</div>
<div class="t" style="left:436.79px;top:396.74px;font-size:13px;color:#e8e8e8;transform:scaleX(1.1608);-webkit-text-stroke:0.2px #e8e8e8">Frame # 0</div>
<div class="t" style="left:520.26px;top:396.74px;font-size:13px;color:#e8e8e8;transform:scaleX(1.1312);-webkit-text-stroke:0.2px #e8e8e8">224.9332 µs</div>
<div class="t" style="left:664.39px;top:396.74px;font-size:13px;color:#e8e8e8;transform:scaleX(1.1358);-webkit-text-stroke:0.2px #e8e8e8">1001 pts</div>
<div class="t" style="left:778.85px;top:396.74px;font-size:13px;color:#e8e8e8;transform:scaleX(1.1747);-webkit-text-stroke:0.2px #e8e8e8">12.83 µs/</div>
<div class="t" style="left:904.99px;top:396.74px;font-size:13px;color:#e8e8e8;transform:scaleX(1.1281);-webkit-text-stroke:0.2px #e8e8e8">353.2048 µs</div>
<div class="t" style="left:35.17px;top:415.75px;font-size:12.7px;color:#e8ecff;transform:scaleX(1.1328);-webkit-text-stroke:0.15px #e8ecff">5 Chirp Results</div>
<div class="t" style="left:59.71px;top:447.45px;font-size:12.7px;color:#e4e6e8;transform:scaleX(1.1554);">ID</div>
<div class="t" style="left:106.02px;top:440.25px;font-size:12.7px;color:#e4e6e8;transform:scaleX(1.1554);">Chirp</div>
<div class="t" style="left:112.25px;top:453.25px;font-size:12.7px;color:#e4e6e8;transform:scaleX(1.1554);">No.</div>
<div class="t" style="left:176.33px;top:440.25px;font-size:12.7px;color:#e4e6e8;transform:scaleX(1.1554);">State</div>
<div class="t" style="left:174.97px;top:453.25px;font-size:12.7px;color:#e4e6e8;transform:scaleX(1.1554);">Index</div>
<div class="t" style="left:269.14px;top:433.65px;font-size:12.7px;color:#e4e6e8;transform:scaleX(1.1554);">Chirp</div>
<div class="t" style="left:267.86px;top:446.95px;font-size:12.7px;color:#e4e6e8;transform:scaleX(1.1554);">Begin</div>
<div class="t" style="left:272.11px;top:460.15px;font-size:12.7px;color:#e4e6e8;transform:scaleX(1.1554);">(ms)</div>
<div class="t" style="left:362.64px;top:433.65px;font-size:12.7px;color:#e4e6e8;transform:scaleX(1.1554);">Chirp</div>
<div class="t" style="left:357.65px;top:446.95px;font-size:12.7px;color:#e4e6e8;transform:scaleX(1.1554);">Length</div>
<div class="t" style="left:365.61px;top:460.15px;font-size:12.7px;color:#e4e6e8;transform:scaleX(1.1554);">(ms)</div>
<div class="t" style="left:455.89px;top:433.65px;font-size:12.7px;color:#e4e6e8;transform:scaleX(1.1554);">Chirp</div>
<div class="t" style="left:457.73px;top:446.95px;font-size:12.7px;color:#e4e6e8;transform:scaleX(1.1554);">Rate</div>
<div class="t" style="left:446.06px;top:460.15px;font-size:12.7px;color:#e4e6e8;transform:scaleX(1.1554);">(kHz/µs)</div>
<div class="t" style="left:529.49px;top:433.65px;font-size:12.7px;color:#e4e6e8;transform:scaleX(1.1554);">Chirp State</div>
<div class="t" style="left:535.51px;top:446.95px;font-size:12.7px;color:#e4e6e8;transform:scaleX(1.1554);">Deviation</div>
<div class="t" style="left:538.81px;top:460.15px;font-size:12.7px;color:#e4e6e8;transform:scaleX(1.1554);">(kHz/µs)</div>
<div class="t" style="left:647.18px;top:433.65px;font-size:12.7px;color:#e4e6e8;transform:scaleX(1.1554);">Avg</div>
<div class="t" style="left:624.00px;top:446.95px;font-size:12.7px;color:#e4e6e8;transform:scaleX(1.1554);">Frequency</div>
<div class="t" style="left:641.75px;top:460.15px;font-size:12.7px;color:#e4e6e8;transform:scaleX(1.1554);">(kHz)</div>
<div class="t" style="left:718.34px;top:440.25px;font-size:12.7px;color:#e4e6e8;transform:scaleX(1.1554);">Bandwidth</div>
<div class="t" style="left:735.25px;top:453.25px;font-size:12.7px;color:#e4e6e8;transform:scaleX(1.1554);">(kHz)</div>
<div class="t" style="left:809.01px;top:433.65px;font-size:12.7px;color:#e4e6e8;transform:scaleX(1.1554);">FM Settling</div>
<div class="t" style="left:829.01px;top:446.95px;font-size:12.7px;color:#e4e6e8;transform:scaleX(1.1554);">Point</div>
<div class="t" style="left:831.61px;top:460.15px;font-size:12.7px;color:#e4e6e8;transform:scaleX(1.1554);">(ms)</div>
<div class="t" style="left:902.39px;top:433.65px;font-size:12.7px;color:#e4e6e8;transform:scaleX(1.1554);">FM Settling</div>
<div class="t" style="left:923.74px;top:446.95px;font-size:12.7px;color:#e4e6e8;transform:scaleX(1.1554);">Time</div>
<div class="t" style="left:924.99px;top:460.15px;font-size:12.7px;color:#e4e6e8;transform:scaleX(1.1554);">(ms)</div>
<div class="t" style="left:63.33px;top:476.70px;font-size:12.4px;color:#bcbcff;transform:scaleX(1.1152);">1</div>
<div class="t" style="left:119.58px;top:476.70px;font-size:12.4px;color:#bcbcff;transform:scaleX(1.1152);">1</div>
<div class="t" style="left:230.25px;top:476.70px;font-size:12.4px;color:#bcbcff;transform:scaleX(1.1152);">1</div>
<div class="t" style="left:296.78px;top:476.70px;font-size:12.4px;color:#bcbcff;transform:scaleX(1.1152);">0.225</div>
<div class="t" style="left:390.28px;top:476.70px;font-size:12.4px;color:#bcbcff;transform:scaleX(1.1152);">0.128</div>
<div class="t" style="left:452.51px;top:476.70px;font-size:12.4px;color:#bcbcff;transform:scaleX(1.1152);">15645.276</div>
<div class="t" style="left:560.36px;top:476.70px;font-size:12.4px;color:#bcbcff;transform:scaleX(1.1152);">245.276</div>
<div class="t" style="left:641.62px;top:476.70px;font-size:12.4px;color:#bcbcff;transform:scaleX(1.1152);">-1069.921</div>
<div class="t" style="left:716.73px;top:476.70px;font-size:12.4px;color:#bcbcff;transform:scaleX(1.1152);">2006844.572</div>
<div class="t" style="left:856.28px;top:476.70px;font-size:12.4px;color:#bcbcff;transform:scaleX(1.1152);">0.225</div>
<div class="t" style="left:949.46px;top:476.70px;font-size:12.4px;color:#bcbcff;transform:scaleX(1.1152);">0.000</div>
<div class="t" style="left:63.54px;top:490.05px;font-size:12.4px;color:#b4f0b4;transform:scaleX(1.1152);">2</div>
<div class="t" style="left:119.79px;top:490.05px;font-size:12.4px;color:#b4f0b4;transform:scaleX(1.1152);">2</div>
<div class="t" style="left:230.11px;top:490.05px;font-size:12.4px;color:#c4c4c4;transform:scaleX(1.1152);">0</div>
<div class="t" style="left:296.57px;top:490.05px;font-size:12.4px;color:#c4c4c4;transform:scaleX(1.1152);">0.354</div>
<div class="t" style="left:390.21px;top:490.05px;font-size:12.4px;color:#c4c4c4;transform:scaleX(1.1152);">0.020</div>
<div class="t" style="left:448.02px;top:490.05px;font-size:12.4px;color:#c4c4c4;transform:scaleX(1.1152);">-99041.442</div>
<div class="t" style="left:560.43px;top:490.05px;font-size:12.4px;color:#c4c4c4;transform:scaleX(1.1152);">544.159</div>
<div class="t" style="left:633.88px;top:490.05px;font-size:12.4px;color:#c4c4c4;transform:scaleX(1.1152);">-43864.248</div>
<div class="t" style="left:716.39px;top:490.05px;font-size:12.4px;color:#c4c4c4;transform:scaleX(1.1152);">1931387.344</div>
<div class="t" style="left:856.07px;top:490.05px;font-size:12.4px;color:#c4c4c4;transform:scaleX(1.1152);">0.354</div>
<div class="t" style="left:949.46px;top:490.05px;font-size:12.4px;color:#c4c4c4;transform:scaleX(1.1152);">0.000</div>
<div class="t" style="left:63.57px;top:503.40px;font-size:12.4px;color:#b4f0b4;transform:scaleX(1.1152);">3</div>
<div class="t" style="left:119.82px;top:503.40px;font-size:12.4px;color:#b4f0b4;transform:scaleX(1.1152);">3</div>
<div class="t" style="left:230.25px;top:503.40px;font-size:12.4px;color:#c4c4c4;transform:scaleX(1.1152);">1</div>
<div class="t" style="left:296.85px;top:503.40px;font-size:12.4px;color:#c4c4c4;transform:scaleX(1.1152);">1.249</div>
<div class="t" style="left:390.28px;top:503.40px;font-size:12.4px;color:#c4c4c4;transform:scaleX(1.1152);">0.128</div>
<div class="t" style="left:452.65px;top:503.40px;font-size:12.4px;color:#c4c4c4;transform:scaleX(1.1152);">15645.287</div>
<div class="t" style="left:560.50px;top:503.40px;font-size:12.4px;color:#c4c4c4;transform:scaleX(1.1152);">245.287</div>
<div class="t" style="left:641.56px;top:503.40px;font-size:12.4px;color:#c4c4c4;transform:scaleX(1.1152);">-1364.763</div>
<div class="t" style="left:716.73px;top:503.40px;font-size:12.4px;color:#c4c4c4;transform:scaleX(1.1152);">2007259.047</div>
<div class="t" style="left:856.35px;top:503.40px;font-size:12.4px;color:#c4c4c4;transform:scaleX(1.1152);">1.249</div>
<div class="t" style="left:949.46px;top:503.40px;font-size:12.4px;color:#c4c4c4;transform:scaleX(1.1152);">0.000</div>
<div class="t" style="left:63.57px;top:516.75px;font-size:12.4px;color:#b4f0b4;transform:scaleX(1.1152);">4</div>
<div class="t" style="left:119.82px;top:516.75px;font-size:12.4px;color:#b4f0b4;transform:scaleX(1.1152);">4</div>
<div class="t" style="left:230.11px;top:516.75px;font-size:12.4px;color:#c4c4c4;transform:scaleX(1.1152);">0</div>
<div class="t" style="left:296.78px;top:516.75px;font-size:12.4px;color:#c4c4c4;transform:scaleX(1.1152);">1.378</div>
<div class="t" style="left:390.21px;top:516.75px;font-size:12.4px;color:#c4c4c4;transform:scaleX(1.1152);">0.020</div>
<div class="t" style="left:448.02px;top:516.75px;font-size:12.4px;color:#c4c4c4;transform:scaleX(1.1152);">-99051.252</div>
<div class="t" style="left:560.36px;top:516.75px;font-size:12.4px;color:#c4c4c4;transform:scaleX(1.1152);">534.348</div>
<div class="t" style="left:633.81px;top:516.75px;font-size:12.4px;color:#c4c4c4;transform:scaleX(1.1152);">-36128.380</div>
<div class="t" style="left:716.59px;top:516.75px;font-size:12.4px;color:#c4c4c4;transform:scaleX(1.1152);">1941840.368</div>
<div class="t" style="left:856.28px;top:516.75px;font-size:12.4px;color:#c4c4c4;transform:scaleX(1.1152);">1.378</div>
<div class="t" style="left:949.46px;top:516.75px;font-size:12.4px;color:#c4c4c4;transform:scaleX(1.1152);">0.000</div>
<div style="position:absolute;left:515.5px;top:382.7px;width:475px;height:13.55px;background:#0a0af2"></div>
<div class="t" style="left:749.49px;top:384.71px;font-size:10.5px;color:#c8c8ff;transform:scaleX(1.0290);">1</div>
<div class="t" style="left:515.49px;top:307.56px;font-size:8.2px;color:#3ccad6;transform:scaleX(1.0894);">M1</div>
<svg style="position:absolute;left:0;top:0" width="1024" height="576"><path d="M516,319.5 L516,325 L521,322.2 Z" fill="#3ad0e0"/></svg>
</body></html>
